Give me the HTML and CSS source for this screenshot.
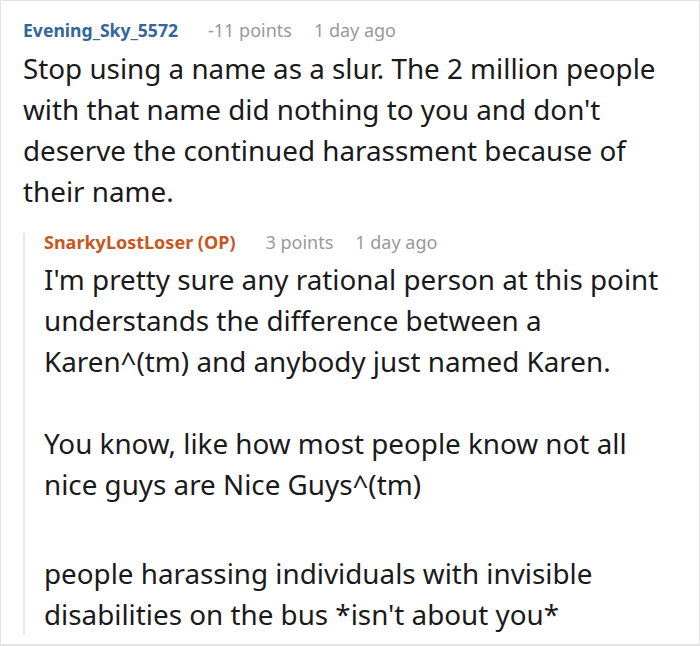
FILE: index.html
```html
<!DOCTYPE html>
<html>
<head>
<meta charset="utf-8">
<link rel="stylesheet" href="styles.css">
</head>
<body>
<div class="frame">
  <div class="comment">
    <div class="meta">
      <span class="author blue">Evening_Sky_5572</span>
      <span class="score">-11 points</span>
      <span class="time">1 day ago</span>
    </div>
    <div class="body">
      <p>Stop using a name as a slur. The 2 million people with that name did nothing to you and don't deserve the continued harassment because of their name.</p>
    </div>
    <div class="reply">
      <div class="meta">
        <span class="author op">SnarkyLostLoser (OP)</span>
        <span class="score">3 points</span>
        <span class="time">1 day ago</span>
      </div>
      <div class="body">
        <p>I'm pretty sure any rational person at this point understands the difference between a Karen^(tm) and anybody just named Karen.</p>
        <p class="gap">You know, like how most people know not all nice guys are Nice Guys^(tm)</p>
        <p>people harassing individuals with invisible disabilities on the bus *isn't about you*</p>
      </div>
    </div>
  </div>
</div>
</body>
</html>
```
FILE: styles.css
```css
html, body {
  margin: 0;
  padding: 0;
  background: #fff;
}
body {
  font-family: "Noto Sans", sans-serif;
  color: #1a1a1b;
}
.frame {
  width: 700px;
  height: 646px;
  box-sizing: border-box;
  border: 1px solid #e3e3e3;
  border-bottom-width: 2px;
  overflow: hidden;
  padding: 17px 20px 0 22px;
}
.meta {
  display: flex;
  align-items: baseline;
  font-size: 18px;
  line-height: 24px;
  height: 24px;
  white-space: nowrap;
}
.author {
  font-weight: bold;
  font-size: 17.6px;
}
.blue { color: #336699; }
.op { color: #c8571f; font-size: 18px; }
.score {
  color: #999;
  margin-left: 30px;
}
.time {
  color: #999;
  margin-left: 22px;
}
.body {
  font-size: 27.8px;
  line-height: 41px;
  color: #1a1a1a;
}
.body p {
  margin: 0 0 41px 0;
}
.body p.gap {
  margin-bottom: 48px;
}
.body p:last-child {
  margin-bottom: -8px;
}
.comment > .body {
  margin-top: 6px;
}
.reply {
  margin-top: 29px;
  border-left: 2px solid #e8e8e8;
  padding-left: 19px;
}
.reply .meta {
  height: 4px;
  line-height: 4px;
  padding-top: 7px;
}
.reply .body {
  margin-top: 15px;
}
```
